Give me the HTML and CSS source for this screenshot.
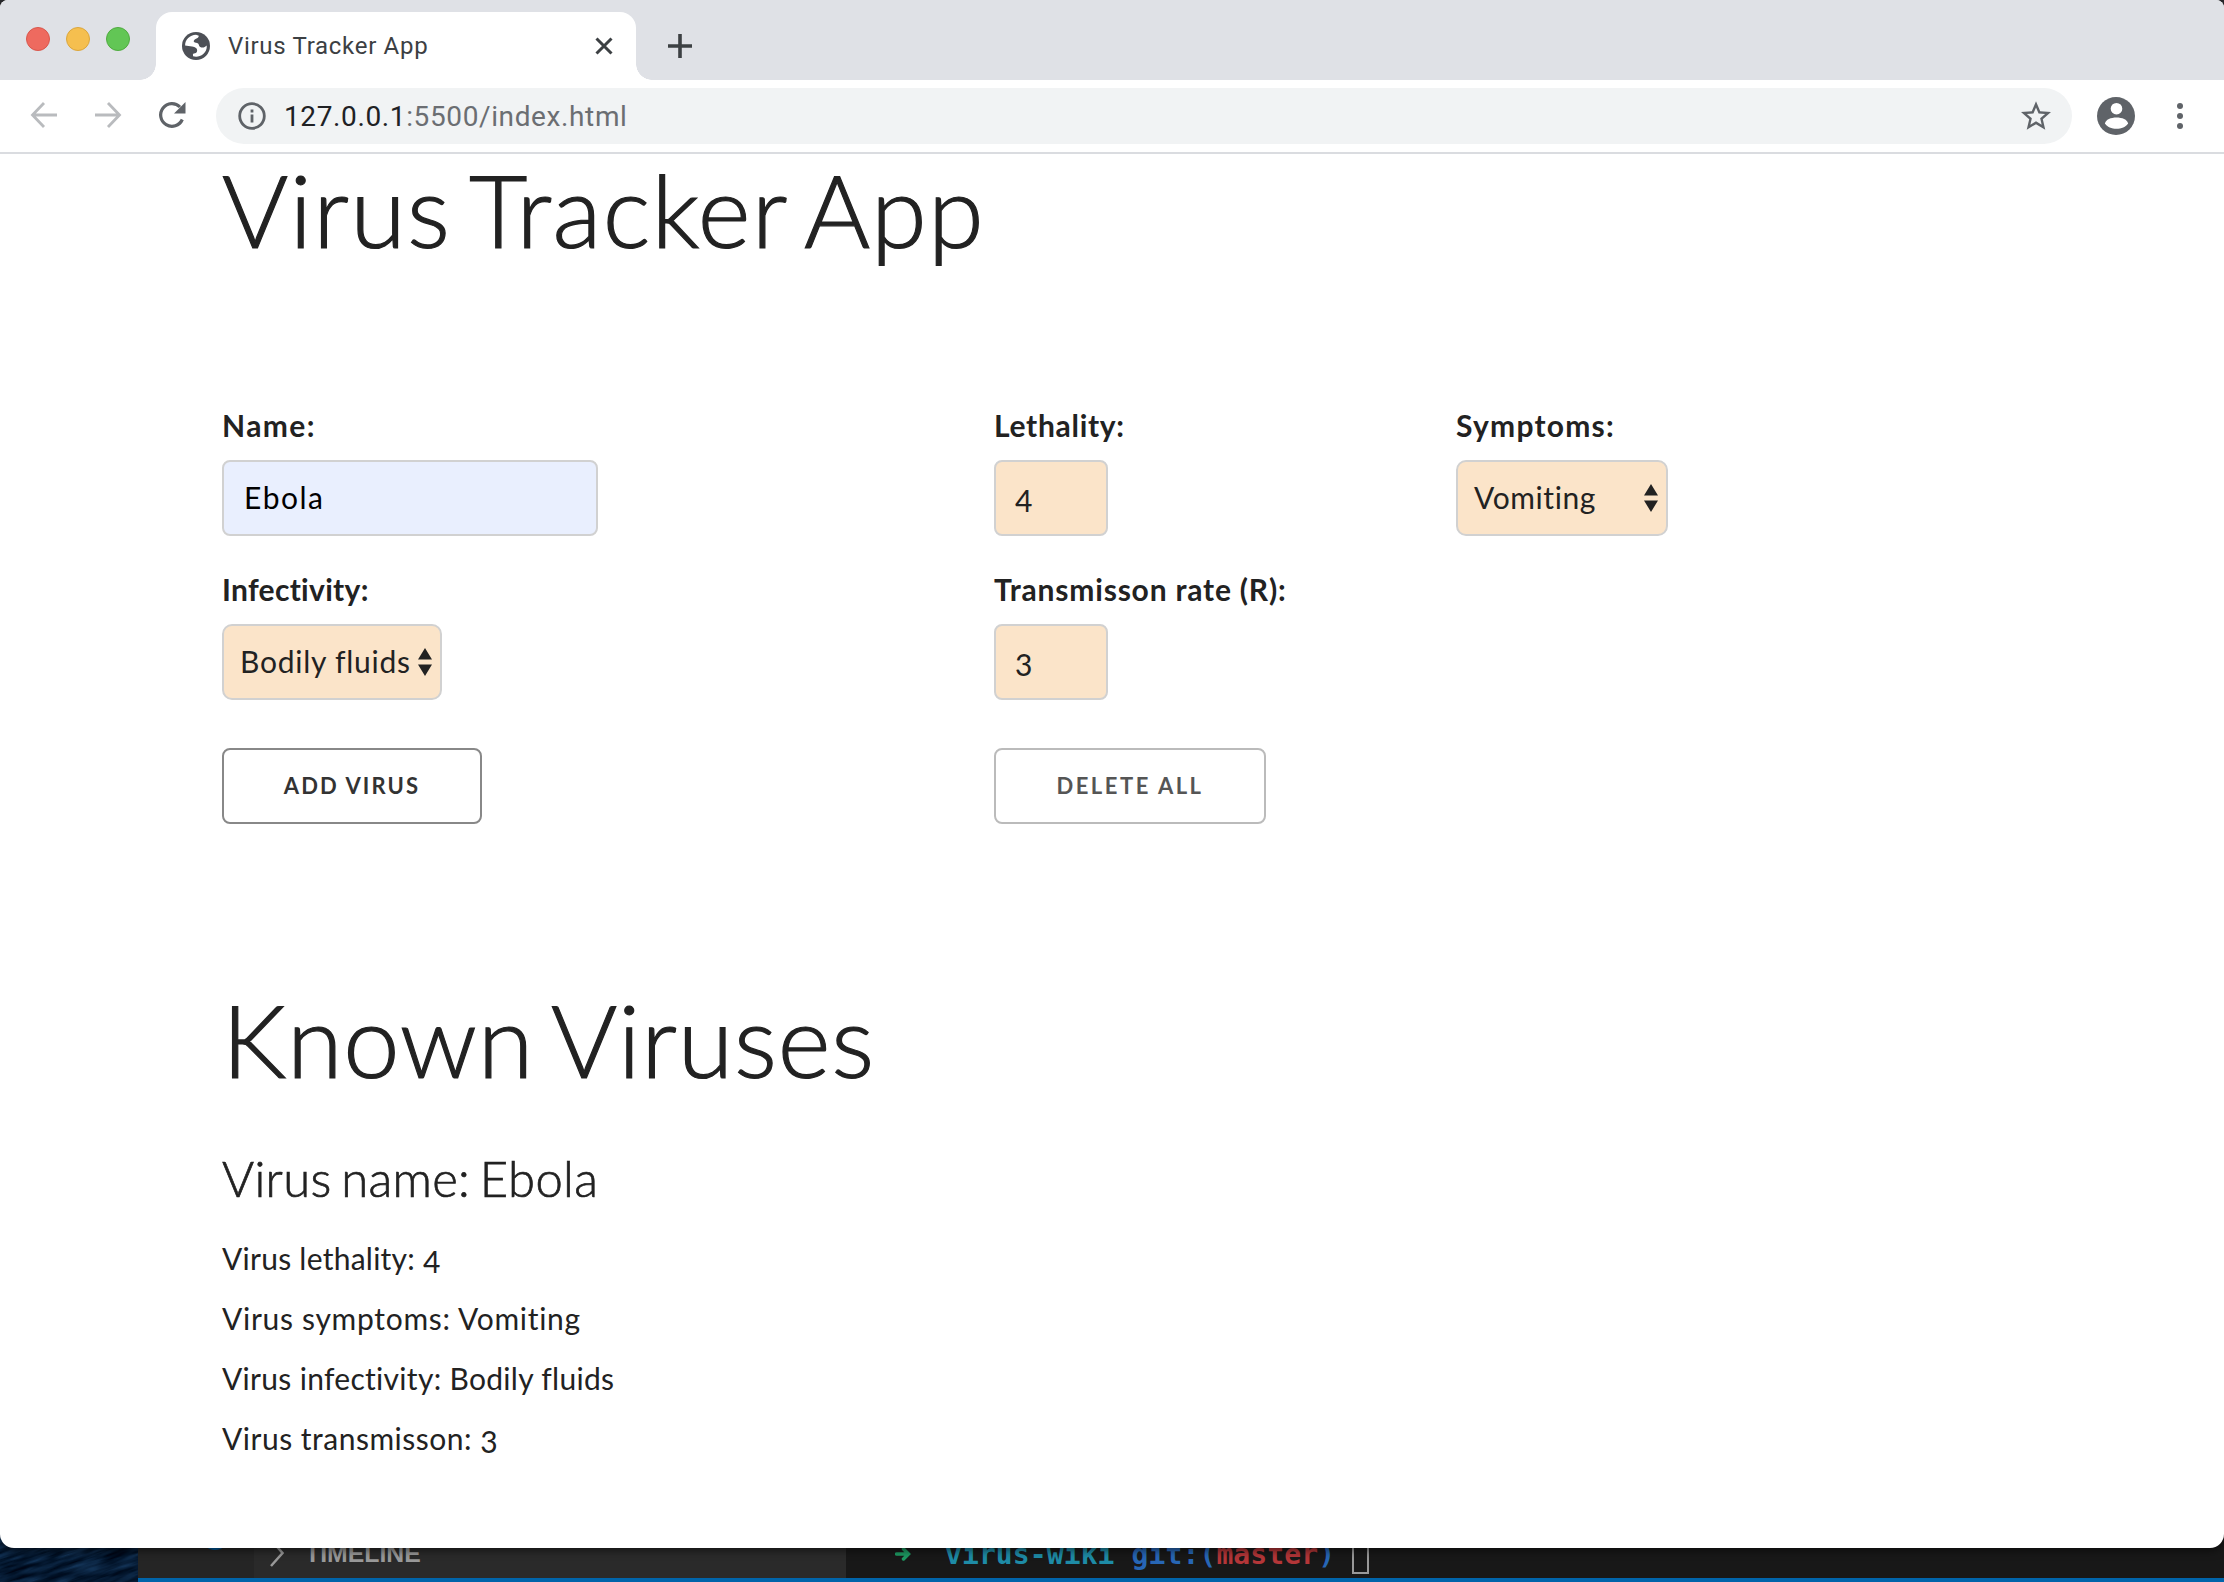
FILE: index.html
```html
<!DOCTYPE html>
<html lang="en">
<head>
<meta charset="utf-8">
<title>Virus Tracker App</title>
<link rel="stylesheet" href="styles.css">
</head>
<body>
<div class="window">
  <header class="tabstrip">
    <div class="lights"><i class="light red"></i><i class="light yellow"></i><i class="light green"></i></div>
    <div class="tab">
      <svg class="globe" viewBox="2 2 20 20"><circle cx="12" cy="12" r="10" fill="#4d5056"/><path fill="#fff" d="M4.200 11.600C4.200 7.500 7.600 4.200 12 4l2 .6c0 1.200-1 1.700-2 2.200-1.400.7-2 1.700-1.400 2.400.7.700 2 .3 2.900 1 .9.800.4 2 1.500 2.500 1 .500 2.300.5 3.200 0l1.500-1c.1 3-.8 4.500-2.500 6-2.200 1.900-4.700 2.300-7.300 1.700l-.1-1.700c.9-.6 2.400-.6 2.800-1.500.5-1.100.2-2-.6-2.700-.8-.8-1.600-1.100-2.800-1.200z"/></svg>
      <span class="tab-title">Virus Tracker App</span>
      <svg class="close" viewBox="0 0 18 18"><path d="M1.500 1.500l15 15M16.500 1.500l-15 15"/></svg>
    </div>
    <svg class="plus" viewBox="0 0 24 24"><path d="M12 0v24M0 12h24"/></svg>
  </header>
  <div class="toolbar">
    <svg class="nav dim" viewBox="0 0 28 28"><path d="M27 14H3M14 2L2.500 14 14 26"/></svg>
    <svg class="nav dim forward" viewBox="0 0 28 28"><path d="M1 14h24M14 2l11.500 12L14 26"/></svg>
    <svg class="nav reload" viewBox="0 0 28 28"><path d="M24.300 18.500A11.300 11.300 0 1 1 22 6"/><path class="solid" d="M27.500 1v11.500H16z"/></svg>
    <div class="omnibox">
      <svg class="info" viewBox="0 0 28 28"><circle cx="14" cy="14" r="12.300"/><path d="M14 12.500v8M14 7.500v3"/></svg>
      <span class="url"><b>127.0.0.1</b>:5500/index.html</span>
      <svg class="star" viewBox="2 2 20 19"><path d="M22 9.240l-7.190-.620L12 2 9.190 8.630 2 9.240l5.460 4.730L5.820 21 12 17.270 18.180 21l-1.630-7.030L22 9.240zM12 15.400l-3.760 2.270 1-4.280-3.320-2.880 4.380-.380L12 6.100l1.710 4.040 4.380.380-3.320 2.880 1 4.280L12 15.400z"/></svg>
    </div>
    <svg class="avatar" viewBox="0 0 38 38"><circle cx="19" cy="19" r="19" fill="#5f6368"/><circle cx="19.500" cy="11.700" r="5.800" fill="#fff"/><path fill="#fff" d="M8 26.500c1-8 22-8 23 0-4 7-19 7-23 0z"/></svg>
    <div class="dots"><i></i><i></i><i></i></div>
  </div>
  <main class="page">
    <h1 class="heading">Virus Tracker App</h1>
    <form class="form">
      <div class="field"><label class="label-name">Name:</label><div class="box name"><span>Ebola</span></div></div>
      <div class="field"><label class="label-lethality">Lethality:</label><div class="box num"><span>4</span></div></div>
      <div class="field"><label class="label-symptoms">Symptoms:</label><div class="box select symptoms"><span>Vomiting</span><svg class="arrows" viewBox="0 0 14 28"><path d="M7 0l7 11.500H0zM7 28l7-11.500H0z"/></svg></div></div>
      <div class="field"><label class="label-infectivity">Infectivity:</label><div class="box select infectivity"><span>Bodily fluids</span><svg class="arrows" viewBox="0 0 14 28"><path d="M7 0l7 11.500H0zM7 28l7-11.500H0z"/></svg></div></div>
      <div class="field"><label class="label-rate">Transmisson rate (R):</label><div class="box num"><span>3</span></div></div>
      <div></div>
      <button type="button" class="button add">ADD VIRUS</button>
      <button type="button" class="button delete">DELETE ALL</button>
    </form>
    <h1 class="heading known">Known Viruses</h1>
    <h2 class="virus-name">Virus name: Ebola</h2>
    <ul class="facts">
      <li class="fact-lethality">Virus lethality: <span class="old">4</span></li>
      <li class="fact-symptoms">Virus symptoms: Vomiting</li>
      <li class="fact-infectivity">Virus infectivity: Bodily fluids</li>
      <li class="fact-transmission">Virus transmisson: <span class="old">3</span></li>
    </ul>
  </main>
</div>
<div class="behind">
  <svg class="water" width="138" height="48"><filter id="w" x="0" y="0" width="1" height="1"><feTurbulence type="fractalNoise" baseFrequency="0.03 0.22" numOctaves="3" seed="4"/><feColorMatrix values="0.15 0 0 0 -0.05  0.28 0 0 0 -0.03  0.4 0 0 0 0.01  0 0 0 0 1"/></filter><rect x="-30" y="-30" width="220" height="120" filter="url(#w)" transform="rotate(-18 69 24)"/></svg>
  <div class="editor">
    <div class="panes">
      <div class="activity"><i class="badge"></i></div>
      <div class="sidebar"><svg class="chev" viewBox="0 0 14 28"><path d="M1 1l11.500 13L1 27"/></svg><span class="timeline">TIMELINE</span></div>
      <div class="terminal"><svg class="arrow" viewBox="0 0 16 14"><path d="M1.500 7h12M8.500 2l5 5-5 5"/></svg><span class="repo">virus-wiki</span><span class="git">git:(</span><span class="branch">master</span><span class="git tail">)</span><i class="cursor"></i></div>
    </div>
    <div class="statusbar"></div>
  </div>
</div>
</body>
</html>
```
FILE: styles.css
```css
* { box-sizing: border-box; }
body { margin: 0; width: 2224px; height: 1582px; overflow: hidden; background: #2b2c2f; font-family: Lato, "Open Sans", sans-serif; color: #222; }
svg { display: block; flex: none; }

/* browser window */
.window { position: relative; z-index: 1; height: 1548px; background: #fff; border-radius: 8px 8px 14px 14px; overflow: hidden; box-shadow: 0 2px 10px rgba(0,0,0,.6); }
.tabstrip { display: flex; height: 80px; background: #dfe1e6; }
.lights { display: flex; gap: 16px; padding: 27px 0 0 26px; width: 156px; }
.light { width: 24px; height: 24px; border-radius: 50%; border: 1px solid; }
.red { background: #ee6a5f; border-color: #d9574c; }
.yellow { background: #f5bf4f; border-color: #dba63c; }
.green { background: #62c655; border-color: #50ab40; }
.tab { position: relative; display: flex; align-items: center; width: 480px; height: 68px; margin-top: 12px; padding-left: 26px; background: #fff; border-radius: 16px 16px 0 0; }
.tab::before, .tab::after { content: ""; position: absolute; bottom: 0; width: 16px; height: 16px; }
.tab::before { left: -16px; background: radial-gradient(circle at 0 0, transparent 15.500px, #fff 16px); }
.tab::after { right: -16px; background: radial-gradient(circle at 100% 0, transparent 15.500px, #fff 16px); }
.globe { width: 28px; height: 28px; }
.tab-title { margin-left: 18px; font: 400 24px/34px Roboto, sans-serif; letter-spacing: .7px; color: #3c4043; white-space: nowrap; }
.close { width: 18px; height: 18px; margin: 0 23px 0 auto; }
.close path, .plus path { fill: none; stroke: #3c4043; stroke-width: 3; }
.plus { width: 24px; height: 24px; margin: 34px 0 0 32px; }
.plus path { stroke-width: 3.600; }
.toolbar { display: flex; align-items: center; height: 74px; padding: 0 0 2px 30px; border-bottom: 2px solid #dadce0; }
.nav { width: 28px; height: 28px; fill: none; stroke: #5f6368; stroke-width: 3.200; }
.dim { stroke: #b9bbbe; stroke-width: 2.800; }
.forward { margin-left: 36px; }
.reload { margin-left: 36px; }
.solid { fill: #5f6368; stroke: none; }
.omnibox { display: flex; align-items: center; width: 1856px; height: 56px; margin-left: 30px; margin-top: 2px; padding: 0 21px 1px 22px; border-radius: 28px; background: #f1f3f4; }
.info { width: 28px; height: 28px; fill: none; stroke: #5f6368; stroke-width: 2.800; }
.url { margin: 2px 0 0 18px; font: 400 28px/40px Roboto, sans-serif; letter-spacing: .62px; color: #6b6e72; white-space: nowrap; }
.url b { font-weight: 400; color: #202124; }
.star { width: 30px; height: 29px; margin-left: auto; fill: #5f6368; }
.avatar { width: 38px; height: 38px; margin: 2px 0 0 25px; }
.dots { display: flex; flex-direction: column; gap: 4px; margin: 2px 0 0 42px; }
.dots i { width: 6px; height: 6px; border-radius: 50%; background: #5f6368; }

/* page */
.page { padding: 0 222px; }
h1, h2, ul { margin: 0; padding: 0; font-weight: 300; }
.heading { width: max-content; font-size: 101px; line-height: 111px; letter-spacing: 1.300px; word-spacing: -8px; white-space: nowrap; -webkit-text-stroke: 1.200px #222; }
.form { display: grid; grid-template-columns: 772px 462px 1fr; grid-template-rows: 164px 164px 90px; padding-top: 141px; }
.field { display: flex; flex-direction: column; align-items: flex-start; }
label { height: 54px; font-size: 30px; line-height: 38px; font-weight: 700; white-space: nowrap; }
.label-name { letter-spacing: 1.400px; }
.label-lethality { letter-spacing: .7px; }
.label-symptoms { letter-spacing: 1.250px; }
.label-infectivity { letter-spacing: .3px; }
.label-rate { letter-spacing: .8px; }
.box { display: flex; align-items: center; height: 76px; padding: 0 0 2px 20px; border: 2px solid #d1d1d1; border-radius: 8px; background: #fbe4c9; font-size: 30px; line-height: 36px; white-space: nowrap; }
.name { width: 376px; background: #e9effe; color: #000; letter-spacing: 1.500px; }
.num { width: 114px; padding: 4px 0 0 19px; }
.select { padding-left: 16px; border-radius: 10px; }
.symptoms { width: 212px; letter-spacing: .6px; }
.infectivity { width: 220px; letter-spacing: .75px; }
.arrows { width: 14px; height: 28px; margin: 2px 8px 0 auto; fill: #222; }
.button { align-self: end; height: 76px; padding: 0; border: 2px solid #888; border-radius: 8px; background: #fff; color: #333; font: 700 22px/70px Lato, sans-serif; letter-spacing: 2.100px; }
.add { width: 260px; }
.delete { width: 272px; border-color: #bbb; color: #555; letter-spacing: 2.500px; }
.known { margin-top: 160px; letter-spacing: .8px; }
.virus-name { width: max-content; margin-top: 53px; font-size: 49px; line-height: 60px; letter-spacing: .3px; word-spacing: -4px; -webkit-text-stroke: .7px #222; }
.facts { list-style: none; margin-top: 20px; font-size: 30px; line-height: 60px; font-weight: 400; }
.fact-lethality { letter-spacing: .25px; }
.fact-symptoms { letter-spacing: .7px; }
.fact-infectivity { letter-spacing: .3px; }
.fact-transmission { letter-spacing: .5px; }
.old { position: relative; top: 3px; }

/* desktop and editor behind the window */
.behind { display: flex; height: 48px; margin-top: -14px; }
.water { background: #04162e; overflow: hidden; }
.water filter { color-interpolation-filters: sRGB; }
.editor { display: flex; flex-direction: column; width: 2086px; }
.panes { display: flex; height: 44px; }
.activity { width: 116px; background: #252525; }
.badge { display: block; width: 28px; height: 28px; margin: -12px 0 0 63px; border-radius: 50%; background: #00599a; }
.sidebar { display: flex; width: 592px; background: #2a2a2a; color: #999; }
.chev { width: 14px; height: 28px; margin: 5px 0 0 16px; fill: none; stroke: #999; stroke-width: 2.500; }
.timeline { margin: 6px 0 0 21px; font: 700 24.800px/28px "Liberation Sans", sans-serif; }
.terminal { display: flex; flex: 1; background: #181818; font: 700 28px/34px "DejaVu Sans Mono", monospace; letter-spacing: .1px; }
.arrow { width: 16px; height: 14px; margin: 13px 34px 0 49px; fill: none; stroke: #1d9a62; stroke-width: 3.500; stroke-linecap: round; }
.repo { color: #1e8ba6; margin: 4px 17px 0 0; }
.git { color: #2766b5; margin-top: 4px; }
.branch { color: #b43638; margin-top: 4px; }
.tail { margin-right: 17px; }
.cursor { width: 17px; height: 36px; margin-top: 4px; border: 2px solid #999; }
.statusbar { height: 4px; background: #0064aa; }
```
